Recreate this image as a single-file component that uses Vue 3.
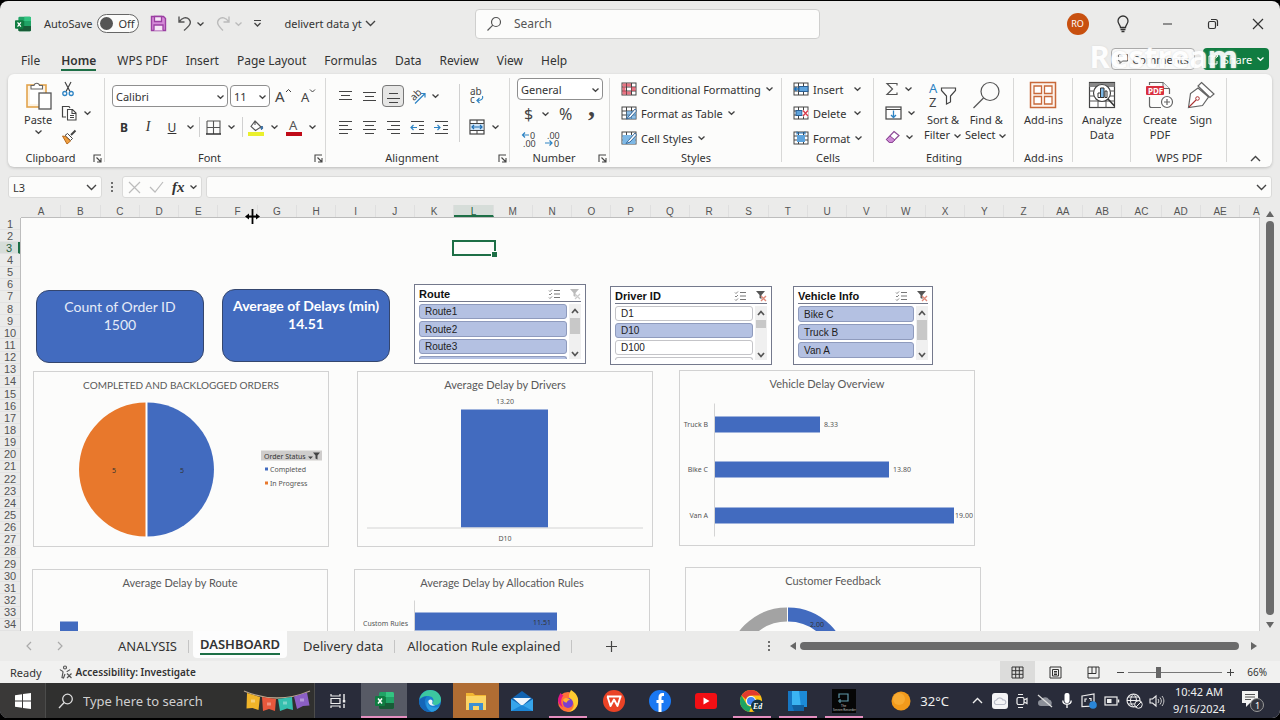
<script setup>
import { h, ref } from 'vue'

const S = 'fill="none" stroke="#555" stroke-width="1.2"'
const grid = '<rect x="1" y="1" width="14" height="12" fill="#fff" stroke="#444"/><path d="M1 5h14M1 9h14M5.5 1v12M10.5 1v12" stroke="#444" fill="none"/>'
const excel = '<rect x="4" y="1" width="15" height="17" rx="1.5" fill="#21a366"/><path d="M11 1h6.500a1.500 1.500 0 0 1 1.500 1.500V6h-8z" fill="#33c481"/><path d="M4 6h7v6H4z" fill="#107c41"/><path d="M4 12h15v4.500a1.500 1.500 0 0 1-1.500 1.500h-12A1.500 1.500 0 0 1 4 16.500z" fill="#185c37"/><rect x="0" y="5" width="10" height="10" rx="1" fill="#107c41"/><path d="M3 7.500l4 5M7 7.500l-4 5" stroke="#fff" stroke-width="1.500"/>'
const lines = (rows) => rows.map(([x1, x2, y]) => `<path d="M${x1} ${y}H${x2}" stroke="#444" stroke-width="1.200"/>`).join('')

const icons = {
  excel: [19, 19, excel],
  caret: [9, 6, '<path d="M1.500 1.500L4.500 4.300L7.500 1.500" fill="none" stroke="#444" stroke-width="1.300"/>'],
  caretPale: [9, 6, '<path d="M1.500 1.500L4.500 4.300L7.500 1.500" fill="none" stroke="#bbb" stroke-width="1.300"/>'],
  caretWhite: [9, 6, '<path d="M1.500 1.500L4.500 4.300L7.500 1.500" fill="none" stroke="#fff" stroke-width="1.300"/>'],
  chevron: [11, 7, '<path d="M1 1L5.500 5.500L10 1" fill="none" stroke="#444" stroke-width="1.400"/>'],
  chevronUp: [11, 7, '<path d="M1 6L5.500 1.500L10 6" fill="none" stroke="#444" stroke-width="1.400"/>'],
  save: [17, 17, '<path d="M1.500 1.500h12l2 2v12h-14z" fill="#d58ad8" stroke="#9b3fa2" stroke-width="1.400"/><path d="M4.500 1.500h7v5h-7zM4 15.500v-5.500h9v5.500" fill="#f6e6f7" stroke="#9b3fa2" stroke-width="1.300"/>'],
  undo: [16, 17, '<path d="M2 1.500V7H7.500M2.200 6.800C5 2.500 9.500 1.500 12 4.200C15 7.500 13 10.500 7 15.500" fill="none" stroke="#555" stroke-width="1.400"/>'],
  redo: [16, 17, '<path d="M14 1.500V7H8.500M13.800 6.800C11 2.500 6.500 1.500 4 4.200C1 7.500 3 10.500 8 15.500" fill="none" stroke="#bbb" stroke-width="1.400"/>'],
  customize: [9, 9, '<path d="M1 1.500h7" stroke="#444" stroke-width="1.200"/><path d="M1.500 4L4.500 7L7.500 4" fill="none" stroke="#444" stroke-width="1.300"/>'],
  search: [16, 16, '<circle cx="10" cy="6" r="4.500" fill="none" stroke="#555" stroke-width="1.200"/><path d="M6.800 9.200L1.500 14.500" stroke="#555" stroke-width="1.200"/>'],
  bulb: [14, 18, '<path d="M4.500 12.500C4.500 10 2 9 2 6a5 5 0 0 1 10 0c0 3-2.500 4-2.500 6.500zM4.500 14.500h5M5.500 16.500h3" fill="none" stroke="#333" stroke-width="1.300"/>'],
  min: [12, 12, '<path d="M1 6h9" stroke="#333" stroke-width="1.200"/>'],
  restore: [12, 12, '<rect x="1.500" y="3.500" width="7" height="7" rx="1.500" fill="none" stroke="#333" stroke-width="1.200"/><path d="M4 1.500h4.500a2 2 0 0 1 2 2V8" fill="none" stroke="#333" stroke-width="1.200"/>'],
  close: [12, 12, '<path d="M1 1l10 10M11 1L1 11" stroke="#333" stroke-width="1.200"/>'],
  comment: [12, 12, '<path d="M1.500 1.500h9v6.500h-5l-2.500 2.500v-2.500h-1.500z" fill="none" stroke="#555"/>'],
  share: [12, 12, '<path d="M6 3H2v8h8V8M5 7c0-3 2-4 6-4M8.500 .8L11 3L8.500 5.200" fill="none" stroke="#fff"/>'],
  paste: [27, 29, '<rect x="2" y="4" width="19" height="22" fill="#fdf3e3" stroke="#e2a34c" stroke-width="1.600"/><rect x="5" y="7" width="13" height="16" fill="#fff"/><path d="M6 8V4.500h3a2.800 2.800 0 0 1 5.500 0h3V8z" fill="#fff" stroke="#666" stroke-width="1.100"/><rect x="14" y="12" width="12" height="16" fill="#fff" stroke="#555" stroke-width="1.300"/>'],
  cut: [14, 16, '<path d="M4 1l5 9.500M10 1L5 10.500" stroke="#444" stroke-width="1.200"/><circle cx="3.800" cy="12.500" r="2" fill="none" stroke="#2e84c4" stroke-width="1.300"/><circle cx="10.200" cy="12.500" r="2" fill="none" stroke="#2e84c4" stroke-width="1.300"/>'],
  copy: [17, 16, '<path d="M5 12H1.500V1.500H8L9 3" fill="none" stroke="#444" stroke-width="1.200"/><path d="M6.500 4.500h5l3.500 3.500v7H6.500zM11 4.500V8.500h4M9 10.500h4M9 12.500h4" fill="#fff" stroke="#444" stroke-width="1.100"/>'],
  painter: [16, 16, '<path d="M14.500 1.500L10 6" stroke="#444" stroke-width="2"/><path d="M6.500 4.500l5 5l-2 2l-5.500-5z" fill="#fff" stroke="#444"/><path d="M1.500 7l3 .5l5 4.500l-3.500 3z" fill="#f0a040" stroke="#b86a1c"/>'],
  fontUp: [18, 18, '<text x="0" y="15" font-size="15" font-family="Noto Sans" fill="#444">A</text><path d="M11 5L13.500 2.500L16 5" fill="none" stroke="#444"/>'],
  fontDown: [18, 18, '<text x="2" y="15" font-size="13" font-family="Noto Sans" fill="#444">A</text><path d="M11 2.500L13.500 5L16 2.500" fill="none" stroke="#444"/>'],
  borders: [15, 15, '<path d="M1 1h13v13M1 1v13M7.500 1v13M1 7.500h13" fill="none" stroke="#555" stroke-width="1.100"/><path d="M0 14h15" stroke="#333" stroke-width="1.600"/>'],
  fill: [18, 17, '<path d="M8 2l6 6l-5.500 3.500L4 7.500zM8 6V1.500" fill="#fff" stroke="#555" stroke-width="1.100"/><path d="M15 7c1.500 2.500 0 3.500-.5 3.500s-1-1.500.5-3.500" fill="#2e84c4" stroke="#2e5f94"/><rect x="1" y="13" width="16" height="4" fill="#eaf02c"/>'],
  color: [16, 17, '<text x="3" y="11" font-size="13" font-family="Noto Sans" fill="#555">A</text><rect x="0" y="13" width="16" height="4" fill="#c00b18"/>'],
  top: [15, 15, lines([[1, 14, 2.5], [3, 12, 6.5], [1, 14, 10.5]])],
  mid: [15, 15, lines([[1, 14, 3.5], [3, 12, 7.5], [1, 14, 11.5]])],
  bot: [15, 15, lines([[3, 12, 4.5], [1, 14, 9.5], [3, 12, 13.5]])],
  left: [15, 15, lines([[1, 14, 1.5], [1, 10, 5.5], [1, 14, 9.5], [1, 10, 13.5]])],
  center: [15, 15, lines([[1, 14, 1.5], [3, 12, 5.5], [1, 14, 9.5], [3, 12, 13.5]])],
  right: [15, 15, lines([[1, 14, 1.5], [5, 14, 5.5], [1, 14, 9.5], [5, 14, 13.5]])],
  outdent: [15, 15, lines([[1, 14, 1.5], [9, 14, 5.5], [9, 14, 9.5], [1, 14, 13.5]]) + '<path d="M7 7.500H1M3.500 5L1 7.500L3.500 10" fill="none" stroke="#2e84c4" stroke-width="1.200"/>'],
  indent: [15, 15, lines([[1, 14, 1.5], [9, 14, 5.5], [9, 14, 9.5], [1, 14, 13.5]]) + '<path d="M0 7.500h6M3.500 5L6 7.500L3.500 10" fill="none" stroke="#2e84c4" stroke-width="1.200"/>'],
  orient: [18, 18, '<text x="-3" y="3" font-size="10" font-family="Noto Sans" fill="#444" transform="translate(6 10) rotate(-45)">ab</text><path d="M7 16.500L17 6.500M13 6.500h4v4" fill="none" stroke="#2e84c4" stroke-width="1.200"/>'],
  wrap: [16, 18, '<text x="1" y="8" font-size="10" font-family="Noto Sans" fill="#444">ab</text><text x="1" y="16" font-size="10" font-family="Noto Sans" fill="#444">c</text><path d="M13.500 9c1 3-1 4.500-5.500 4.500M10.500 11L8 13.500L10.500 16" fill="none" stroke="#2e84c4" stroke-width="1.200"/>'],
  merge: [16, 16, '<rect x="1" y="1" width="14" height="14" fill="#fff" stroke="#444" stroke-width="1.200"/><rect x="1.600" y="4.500" width="12.800" height="7" fill="#cfe4f6"/><path d="M1 4.500h14M1 11.500h14M8 1v3.500M8 11.500V15" stroke="#444"/><path d="M3 8h10M5 6L3 8l2 2M11 6l2 2l-2 2" fill="none" stroke="#1f6fb4" stroke-width="1.200"/>'],
  decUp: [16, 16, '<path d="M8 4H1.500M4 1.500L1.500 4L4 6.500" fill="none" stroke="#2e84c4" stroke-width="1.200"/><text x="9" y="7.500" font-size="9" font-family="Noto Sans" fill="#444">0</text><text x="2" y="15.500" font-size="9" font-family="Noto Sans" fill="#444">.00</text>'],
  decDown: [16, 16, '<text x="2" y="7.500" font-size="9" font-family="Noto Sans" fill="#444">.00</text><path d="M0 12h7M4.500 9.500L7 12L4.500 14.500" fill="none" stroke="#2e84c4" stroke-width="1.200"/><text x="9" y="15.500" font-size="9" font-family="Noto Sans" fill="#444">0</text>'],
  cond: [16, 14, grid + '<path d="M1.500 1.500h4v3h-4zM1.500 9h4v3.500h-4zM10.500 5h4v4h-4zM6 1.500h4v3H6zM1.500 5h3v4h-3zM6 9.500h4v3H6z" fill="#e0455a" fill-opacity=".75"/>'],
  table: [16, 14, grid + '<path d="M5.500 5h9.500v8H5.500z" fill="#5ea3dc" fill-opacity=".7"/><path d="M14 3L8 10l-2.500 3l4-1.500L15.500 5z" fill="#fff" stroke="#2a5f94" stroke-width=".9"/>'],
  styles: [16, 14, grid + '<path d="M1.500 4h13v9h-13z" fill="#7db8e6"/><path d="M14 2L7.500 9.500l-2.500 3l4-1.500L15.500 4z" fill="#fff" stroke="#2a5f94" stroke-width=".9"/>'],
  insert: [16, 14, grid + '<rect x="6" y="4.500" width="9" height="5" fill="#5ea3dc" stroke="#2a5f94"/><path d="M6 7H1.500M3.500 5L1.500 7l2 2" fill="none" stroke="#1f6fb4" stroke-width="1.300"/>'],
  del: [16, 14, grid + '<rect x="3" y="4.500" width="6" height="5" fill="#5ea3dc" stroke="#2a5f94"/><path d="M9.500 4h6v6.500h-6z" fill="#fff"/><path d="M10 4.500l5 5.500M15 4.500l-5 5.500" stroke="#d83b4c" stroke-width="1.300"/>'],
  format: [16, 14, grid + '<rect x="4" y="4" width="8" height="7" fill="#5ea3dc"/><path d="M4 2h8M4 .5v3M12 .5v3" stroke="#1f6fb4"/>'],
  sum: [14, 14, '<path d="M12 3.500V1.500H2L7.500 7L2 12.500H12V10.500" fill="none" stroke="#555" stroke-width="1.200"/>'],
  fillDown: [17, 14, '<rect x="1" y="1" width="15" height="12" fill="#fff" stroke="#444" stroke-width="1.200"/><path d="M1 3.500h15" stroke="#444"/><path d="M8.500 4.500v7M6 9l2.500 2.500L11 9" fill="none" stroke="#2e84c4" stroke-width="1.300"/>'],
  eraser: [15, 14, '<path d="M9 1.500l5 4L7 12.500H4.500L1.500 9.500z" fill="#fff" stroke="#8d4a96" stroke-width="1.200"/><path d="M5 6l5 4l-3 2.500H4.500L1.500 9.500z" fill="#cf8bd6" stroke="#8d4a96"/>'],
  sort: [28, 28, '<text x="0" y="12" font-size="13" font-family="Noto Sans" fill="#2e84c4">A</text><text x="0" y="26" font-size="13" font-family="Noto Sans" fill="#444">Z</text><path d="M12.500 7h14v2.500L21.500 15v6l-4 2v-8L12.500 9.500z" fill="#fff" stroke="#444" stroke-width="1.200"/>'],
  find: [28, 28, '<circle cx="18" cy="10.500" r="9" fill="none" stroke="#555" stroke-width="1.200"/><path d="M11.500 17L1.500 27" stroke="#555" stroke-width="1.300"/>'],
  addins: [28, 28, '<rect x="1.500" y="1.500" width="25" height="25" fill="#fdf4ee" stroke="#c8693a" stroke-width="1.500"/><path d="M5 5h7.500v7.500H5zM15.500 5H23v7.500h-7.500zM5 15.500h7.500V23H5zM15.500 15.500H23V23h-7.500z" fill="#fff" stroke="#c8693a" stroke-width="1.300"/>'],
  analyze: [28, 28, '<rect x="1.500" y="1.500" width="25" height="25" fill="#fff" stroke="#444" stroke-width="1.200"/><path d="M1.500 2h25v4h-25z" fill="#888"/><path d="M1.500 10h25M1.500 15h25M1.500 20h25M10 20v6.500M18 20v6.500" stroke="#555"/><circle cx="14" cy="12" r="8.500" fill="#fff" stroke="#444" stroke-width="1.200"/><path d="M10 12h2.500v4.500H10zM17 10h2v6.500h-2z" fill="#fff" stroke="#333"/><path d="M12.500 7H16v9.500h-3.500z" fill="#7db8e6" stroke="#333"/><path d="M20 18l6.500 7" stroke="#333" stroke-width="1.600"/>'],
  pdf: [30, 28, '<path d="M4.500 16v8.500a2 2 0 0 0 2 2H16M4.500 4V1.500H18L24.500 8v5" fill="none" stroke="#666" stroke-width="1.200"/><path d="M18 1.500V7.500h6.500" fill="#eee" stroke="#666"/><rect x="1" y="5" width="18" height="9" rx="1" fill="#d9303f"/><text x="3" y="12.500" font-size="8" font-weight="700" font-family="Noto Sans" fill="#fff">PDF</text><circle cx="22" cy="21" r="5.500" fill="#fff" stroke="#666" stroke-width="1.200"/><path d="M22 18v6M19 21h6" stroke="#666" stroke-width="1.200"/>'],
  sign: [28, 28, '<path d="M14.500 1.500L27 13l-4 3.500L11 5zM11 7L3.500 12.500L1.500 26.500l14-2L21.500 16z" fill="#fff" stroke="#666" stroke-width="1.200"/><path d="M2 26l7-7" stroke="#a33" stroke-width="1.100"/><circle cx="10.500" cy="17.500" r="1.800" fill="#fff" stroke="#a33"/>'],
  launch: [9, 9, '<path d="M1 8V1h7M3.500 3.500L7.500 7.500M8 4V8H4" fill="none" stroke="#444" stroke-width="1.100"/>'],
  dots: [4, 12, '<circle cx="2" cy="2" r="1" fill="#444"/><circle cx="2" cy="6" r="1" fill="#444"/><circle cx="2" cy="10" r="1" fill="#444"/>'],
  cancel: [13, 13, '<path d="M1 1l11 11M12 1L1 12" stroke="#bcbcbc" stroke-width="1.200"/>'],
  ok: [15, 12, '<path d="M1 6l5 5L14 1" fill="none" stroke="#bcbcbc" stroke-width="1.200"/>'],
  multi: [12, 10, '<path d="M5 1.500h6M5 5h6M5 8.500h6" stroke="#777"/><path d="M0 1.500l1 1L3 .5M0 5l1 1L3 4M0 8.500l1 1L3 7.500" fill="none" stroke="#777" stroke-width=".9"/>'],
  clear: [12, 12, '<path d="M1 1h9L6.500 5v4L4.500 8V5z" fill="#555"/><path d="M6 6l5 5M11 6l-5 5" stroke="#e08a7a" stroke-width="1.400"/>'],
  clearPale: [12, 12, '<path d="M1 1h9L6.500 5v4L4.500 8V5z" fill="#bbb"/><path d="M6 6l5 5M11 6l-5 5" stroke="#ccc" stroke-width="1.200"/>'],
  up: [8, 6, '<path d="M1 5L4 1.500L7 5" fill="none" stroke="#555" stroke-width="1.700"/>'],
  down: [8, 6, '<path d="M1 1L4 4.500L7 1" fill="none" stroke="#555" stroke-width="1.700"/>'],
  triUp: [8, 6, '<path d="M0 6h8L4 0z" fill="#666"/>'],
  triDown: [8, 6, '<path d="M0 0h8L4 6z" fill="#666"/>'],
  triLeft: [6, 8, '<path d="M6 0v8L0 4z" fill="#666"/>'],
  triRight: [6, 8, '<path d="M0 0v8l6-4z" fill="#666"/>'],
  resize: [15, 15, '<path d="M7.500 0v15M2 7.500h11" stroke="#000" stroke-width="1.800"/><path d="M0 7.500l4-3v6zM15 7.500l-4-3v6z" fill="#000"/>'],
  prev: [6, 10, '<path d="M5 1L1 5l4 4" fill="none" stroke="#aaa" stroke-width="1.200"/>'],
  next: [6, 10, '<path d="M1 1l4 4l-4 4" fill="none" stroke="#aaa" stroke-width="1.200"/>'],
  plus: [11, 11, '<path d="M5.500 0v11M0 5.500h11" stroke="#444" stroke-width="1.200"/>'],
  plusS: [7, 7, '<path d="M3.500 0v7M0 3.500h7" stroke="#444"/>'],
  minusS: [7, 7, '<path d="M0 3.500h7" stroke="#444"/>'],
  access: [14, 14, '<circle cx="6" cy="2.500" r="1.500" ' + S + '/><path d="M1 4.500c1 1.500 3 1 3 2.500L3 12.500l1.500.5L6 9M11 4.500c-1 1.500-3 1-3 2.500M8 8.500l4.500 4.500M12.500 8.500L8 13" ' + S + '/>'],
  vNormal: [13, 13, '<path d="M1 1h11v11H1zM1 4.700h11M1 8.300h11M4.700 1v11M8.300 1v11" fill="none" stroke="#333"/>'],
  vPage: [13, 13, '<path d="M1 1h11v11H1zM3.500 3.500h6v6.500h-6zM5 5.500h3M5 7h3M5 8.500h3" fill="none" stroke="#333"/>'],
  vBreak: [13, 13, '<path d="M1 1h11v11H1zM5 1v6.500h4V1M1 7.500h4" fill="none" stroke="#333"/>'],
  win: [16, 16, '<path d="M0 2.200L7 1.200V7.500H0zM8 1L16 0V7.500H8zM0 8.500h7v6.300L0 13.800zM8 8.500h8V16L8 15z" fill="#fff"/>'],
  searchW: [16, 16, '<circle cx="9.500" cy="6" r="4.800" fill="none" stroke="#ddd" stroke-width="1.300"/><path d="M6.200 9.500L1 15" stroke="#ddd" stroke-width="1.300"/>'],
  bunting: [68, 24, '<path d="M1 2Q34 16 67 2" fill="none" stroke="#b9a58c" stroke-width="1.300"/><path d="M4 4l13 4l-1.500 13l-6-2l-6 .5z" fill="#f0b429"/><path d="M19 8l14 2l-1 12l-6-2l-6 2z" fill="#e8583c"/><path d="M35 10l14-2l1 13l-6-1.500l-7 2.500z" fill="#35bfae"/><path d="M51 7.500l13-4l2.500 13l-6.500 .5l-6 3z" fill="#8c5fc4"/><path d="M8 12h4M24 15h4M40 14h4M57 11h4" stroke="#fff" stroke-opacity=".35" stroke-width="3"/>'],
  taskview: [16, 16, '<path d="M1 1v2h9V1M1 15v-2h9v2M1 5.500h9v5H1z" fill="none" stroke="#eee" stroke-width="1.200"/><path d="M14 1v7M14 11v4" stroke="#eee" stroke-width="1.400"/><rect x="12.800" y="7" width="2.500" height="2.500" fill="#eee"/>'],
  edge: [24, 24, '<circle cx="12" cy="12" r="11" fill="#1b7fd0"/><path d="M1.500 10C3 4 8 1 12 1c7 0 11 5 11 9c0 4-3 6-6 6c-2 0-3-1-2-2.500C17 9 13 7 9.500 7C6 7 3 8.500 1.500 10z" fill="#3cc7a0"/><path d="M9.500 7.500C5 9 6 20 14 22.700C7 24 1 19 1 12C3 8.500 6 7 9.500 7.500z" fill="#1466b8"/><path d="M10 11c-1.500 4 2 8 8 7.500c1.500 0 3-.8 3.500-1.200c-2 4-6 5.700-8 5.500C8 20 7 14 10 11z" fill="#2a9ae0"/><path d="M10.500 11.500c2-2 4.500-.5 4 1.500c-1 2 .5 3 3 3c-4 2-8-1-7-4.500z" fill="#eaf6fb"/>'],
  explorer: [22, 20, '<path d="M1 2h7l2 2h11v15H1z" fill="#f2b632"/><path d="M1 5h20v14H1z" fill="#fbd464"/><path d="M4 19v-7h14v7h-4v-4H8v4z" fill="#3f8fd0"/>'],
  mail: [24, 22, '<path d="M1 9L12 1l11 8v12H1z" fill="#1263b0"/><path d="M3 8h18L12 16z" fill="#eef5fb"/><path d="M1 9l11 7l11-7v12H1z" fill="#37a5ea"/><path d="M1 21l11-6l11 6z" fill="#1c86d6"/>'],
  firefox: [24, 24, '<circle cx="12" cy="13" r="10" fill="#ff7139"/><path d="M15 1c5 3 8 7 7 13c-1 5-5 9-10 9c5-2 7-6 5-10c-1-2-4-3-4-6c0-2 1-4 2-6z" fill="#ffcb30"/><path d="M2 11C2 8 3.500 6 4.500 4c1 1 1.500 2 3 2.500C5 9 4 14 7 18c-3-1-5-4-5-7z" fill="#e31587"/><circle cx="12" cy="14" r="5" fill="#7a3fd0"/><path d="M7 11c2-3 6-2 7 0c-2 0-3 1-3 2.500c-2 0-3-.5-4-2.500z" fill="#ffb02e"/>'],
  wps: [24, 24, '<circle cx="12" cy="12" r="11" fill="#ea4326"/><path d="M5 7.500h14.500M5.500 7.500L8.500 17L12 10.500L15.500 17L18.500 7.500" fill="none" stroke="#fff" stroke-width="1.900" stroke-linejoin="round"/>'],
  facebook: [24, 24, '<circle cx="12" cy="12" r="11" fill="#1a78f2"/><path d="M16 5.500h-1.500c-2 0-2.500 1-2.500 3V23M8.500 12.500h7" fill="none" stroke="#fff" stroke-width="3"/>'],
  youtube: [24, 18, '<rect x="1" y="1" width="22" height="16" rx="3" fill="#f20f14"/><path d="M9.500 5.500v7l6-3.500z" fill="#fff"/>'],
  chrome: [26, 24, '<circle cx="12" cy="12" r="11" fill="#fbc116"/><path d="M2.500 6.500a11 11 0 0 1 19 0H12a5.500 5.500 0 0 0-5 4z" fill="#e33b2e"/><path d="M2.500 6.500L7.500 15c1 2 3 2.500 5 2.500L10 23A11 11 0 0 1 2.500 6.500z" fill="#1da462"/><circle cx="12" cy="12" r="5" fill="#fff"/><circle cx="12" cy="12" r="4" fill="#4285f4"/><circle cx="18.500" cy="17" r="6.500" fill="#17323f"/><text x="14" y="20" font-size="8" font-style="italic" font-weight="700" font-family="Liberation Serif" fill="#fff">Ed</text>'],
  phone: [22, 22, '<path d="M1 1h15v20H1z" fill="#1676c2"/><path d="M5 1h12v14H5z" fill="#3bb4f2"/><path d="M12 1h8v16h-6z" fill="#1c8bd8"/><path d="M5 15h12v6H7z" fill="#125f9e"/>'],
  recorder: [24, 24, '<rect width="24" height="24" fill="#060606"/><path d="M7 9V5h3M9 5h7v7H9M6 12h4M8 10v4" fill="none" stroke="#5f97a8" stroke-width="1.200"/><text x="9" y="18" font-size="3" font-family="Noto Sans" fill="#ccc">The</text><text x="1" y="21.500" font-size="3" font-family="Noto Sans" fill="#ccc">Screen Recorder</text>'],
  sun: [20, 20, '<circle cx="10" cy="10" r="9.500" fill="#f19a1b"/><circle cx="8" cy="8" r="6" fill="#f7ab33"/>'],
  upW: [11, 7, '<path d="M1 6L5.500 1.500L10 6" fill="none" stroke="#eee" stroke-width="1.400"/>'],
  cloud: [16, 16, '<rect width="16" height="16" rx="3" fill="#f4f4f6"/><path d="M4 11.500a2.300 2.300 0 0 1 .5-4.500a3.500 3.500 0 0 1 6.500 0a2.300 2.300 0 0 1 1 4.500z" fill="none" stroke="#b9bcc8" stroke-width="1.200"/>'],
  cam: [14, 16, '<rect x="2" y="4.500" width="7" height="7" rx="1.500" fill="none" stroke="#eee" stroke-width="1.200"/><path d="M9 7l3-1.500v5L9 9M3 1.500h5M3 14.500h5" fill="none" stroke="#eee" stroke-width="1.200"/>'],
  cloudOff: [16, 14, '<path d="M4 12a3 3 0 0 1 0-6a4.500 4.500 0 0 1 8-.5a3.500 3.500 0 0 1 1 6.500z" fill="#8d9099"/><path d="M1 1l14 12" stroke="#ddd" stroke-width="1.300"/>'],
  mic: [10, 16, '<rect x="2.500" y="0" width="5" height="10" rx="2" fill="#fff"/><path d="M.8 7.500c0 5 8.400 5 8.400 0M5 11.500V15" fill="none" stroke="#fff" stroke-width="1.300"/>'],
  sync: [17, 16, '<path d="M1 3l12-2v12l-12 .5z" fill="none" stroke="#eee" stroke-width="1.200"/><path d="M4 9V6h2M8 5.500h2V8" fill="none" stroke="#eee" stroke-width="1.200"/><circle cx="12" cy="12" r="3.800" fill="#2a86d8"/>'],
  battery: [16, 10, '<rect x="1" y="1" width="12" height="8" fill="none" stroke="#eee" stroke-width="1.200"/><rect x="3" y="3" width="4.500" height="4" fill="#eee"/><path d="M14.500 3.500v3" stroke="#eee" stroke-width="1.500"/>'],
  globe: [17, 16, '<circle cx="7.500" cy="7.500" r="6.500" fill="none" stroke="#eee" stroke-width="1.100"/><path d="M1 7.500h13M2 4h11M2 11h8M7.500 1c-4 4-4 9 0 13M7.500 1c4 4 4 9 0 13" fill="none" stroke="#eee"/><circle cx="12.500" cy="11.500" r="3.800" fill="#2b2e3b" stroke="#eee"/><path d="M10 14l5-5" stroke="#eee"/>'],
  sound: [15, 14, '<path d="M1 5h2.500L7 2v10L3.500 9H1z" fill="none" stroke="#eee" stroke-width="1.100"/><path d="M9 5c1 1.500 1 2.500 0 4M11 3.500c1.800 2.500 1.800 4.500 0 7M13 2c2.500 3.500 2.500 6.500 0 10" fill="none" stroke="#ccc"/>'],
  notif: [24, 24, '<path d="M1 2h16v12H9l-4 4v-4H1z" fill="#f3f3f3"/><path d="M4 5.500h10M4 8h10M4 10.500h6" stroke="#555"/><circle cx="16" cy="16" r="6.500" fill="#33353f" stroke="#999"/><text x="14" y="19.500" font-size="9" font-family="Noto Sans" fill="#fff">1</text>'],
}

const Ico = (props) => {
  const [w, ht, markup] = icons[props.n]
  return h('svg', { width: w, height: ht, viewBox: `0 0 ${w} ${ht}`, 'aria-hidden': 'true', innerHTML: markup })
}
Ico.props = ['n']

const menu = ['File', 'Home', 'WPS PDF', 'Insert', 'Page Layout', 'Formulas', 'Data', 'Review', 'View', 'Help']
const cols = [...'ABCDEFGHIJKLMNOPQRSTUVWXYZ'].concat(['AA', 'AB', 'AC', 'AD', 'AE', 'AF'])
const slicers = ref([
  { id: 'route', title: 'Route', clear: 'clearPale', items: [['Route1', 1], ['Route2', 1], ['Route3', 1]], more: 'on' },
  { id: 'driver', title: 'Driver ID', clear: 'clear', items: [['D1', 0], ['D10', 1], ['D100', 0]], more: 'off' },
  { id: 'vehicle', title: 'Vehicle Info', clear: 'clear', items: [['Bike C', 1], ['Truck B', 1], ['Van A', 1]], more: '' },
])
const vehicleBars = [
  { name: 'Truck B', y: 45, w: 105, value: '8.33', vx: 144 },
  { name: 'Bike C', y: 90, w: 174, value: '13.80', vx: 213 },
  { name: 'Van A', y: 136, w: 239, value: '19.00', vx: 275 },
]
const sheets = ['ANALYSIS', 'DASHBOARD', 'Delivery data', 'Allocation Rule explained']
const apps = [
  ['Excel', 'excel', 'active run'], ['Edge', 'edge', ''], ['File Explorer', 'explorer', 'alert'], ['Mail', 'mail', ''],
  ['Firefox', 'firefox', 'run'], ['WPS Office', 'wps', ''], ['Facebook', 'facebook', ''], ['YouTube', 'youtube', ''],
  ['Chrome', 'chrome', 'run'], ['Phone Link', 'phone', 'run'], ['Screen Recorder', 'recorder', 'run'],
]
const tray = ['upW', 'cloud', 'cam', 'cloudOff', 'mic', 'sync', 'battery', 'globe', 'sound']
</script>

<template>
  <div class="screen">
    <div class="window">
      <header class="title">
        <div class="quick">
          <Ico n="excel" class="logo" />
          <label class="auto">AutoSave <span class="toggle"><input type="checkbox" aria-label="AutoSave"><i></i><span>Off</span></span></label>
          <button aria-label="Save" class="save"><Ico n="save" /></button>
          <button aria-label="Undo" class="undo"><Ico n="undo" /><Ico n="caret" /></button>
          <button aria-label="Redo" class="undo"><Ico n="redo" /><Ico n="caretPale" /></button>
          <button aria-label="Customize toolbar" class="cust"><Ico n="customize" /></button>
          <button class="filename">delivert data yt <Ico n="chevron" /></button>
        </div>
        <label class="search"><Ico n="search" /><input type="text" placeholder="Search" aria-label="Search"></label>
        <div class="winctl">
          <button aria-label="Account"><span class="avatar">RO</span></button>
          <button aria-label="Tips"><Ico n="bulb" /></button>
          <button aria-label="Minimize"><Ico n="min" /></button>
          <button aria-label="Restore"><Ico n="restore" /></button>
          <button aria-label="Close"><Ico n="close" /></button>
        </div>
      </header>

      <nav class="menu">
        <button v-for="m in menu" :key="m" :class="{ on: m === 'Home' }">{{ m }}</button>
        <div class="collab">
          <button class="comments"><Ico n="comment" />Comments</button>
          <button class="share"><Ico n="share" />Share <Ico n="caretWhite" /></button>
          <span class="watermark">Restream</span>
        </div>
      </nav>

      <section class="ribbon">
        <div class="group">
          <div class="body clip">
            <button class="big"><Ico n="paste" /><span>Paste</span><Ico n="caret" /></button>
            <div class="stack">
              <button aria-label="Cut"><Ico n="cut" /></button>
              <button aria-label="Copy"><Ico n="copy" /><Ico n="caret" /></button>
              <button aria-label="Format painter"><Ico n="painter" /></button>
            </div>
          </div>
          <div class="foot">Clipboard<Ico n="launch" /></div>
        </div>

        <div class="group">
          <div class="body font">
            <div class="line">
              <label class="combo face"><select aria-label="Font"><option>Calibri</option></select><Ico n="caret" /></label>
              <label class="combo size"><select aria-label="Font size"><option>11</option></select><Ico n="caret" /></label>
              <button class="w24" aria-label="Increase font size"><Ico n="fontUp" /></button>
              <button class="w24" aria-label="Decrease font size"><Ico n="fontDown" /></button>
            </div>
            <div class="line">
              <button class="w24"><b>B</b></button>
              <button class="w24"><i class="serif">I</i></button>
              <button class="w24"><u>U</u></button>
              <button class="w12" aria-label="Underline style"><Ico n="caret" /></button>
              <span class="sep"></span>
              <button class="w20" aria-label="Borders"><Ico n="borders" /></button>
              <button class="w16" aria-label="Border options"><Ico n="caret" /></button>
              <span class="sep"></span>
              <button class="w20" aria-label="Fill color"><Ico n="fill" /></button>
              <button class="w16" aria-label="Fill options"><Ico n="caret" /></button>
              <button class="w24" aria-label="Font color"><Ico n="color" /></button>
              <button class="w12" aria-label="Font color options"><Ico n="caret" /></button>
            </div>
          </div>
          <div class="foot">Font<Ico n="launch" /></div>
        </div>

        <div class="group">
          <div class="body align">
            <div class="font">
              <div class="line">
                <button class="w24" aria-label="Top align"><Ico n="top" /></button>
                <button class="w24" aria-label="Middle align"><Ico n="mid" /></button>
                <button class="w24 pressed" aria-label="Bottom align"><Ico n="bot" /></button>
                <button class="w24" aria-label="Orientation"><Ico n="orient" /></button>
                <button class="w12" aria-label="Orientation options"><Ico n="caret" /></button>
              </div>
              <div class="line">
                <button v-for="a in ['left', 'center', 'right', 'outdent', 'indent']" :key="a" class="w24" :aria-label="a"><Ico :n="a" /></button>
              </div>
            </div>
            <div class="font merge">
              <div class="line"><button class="w24" aria-label="Wrap text"><Ico n="wrap" /></button></div>
              <div class="line"><button class="w24" aria-label="Merge"><Ico n="merge" /></button><button class="w12" aria-label="Merge options"><Ico n="caret" /></button></div>
            </div>
          </div>
          <div class="foot">Alignment<Ico n="launch" /></div>
        </div>

        <div class="group">
          <div class="body number">
            <label class="combo"><select aria-label="Number format"><option>General</option></select><Ico n="caret" /></label>
            <div class="line"><button class="sym w24">$</button><button class="w12" aria-label="Currency options"><Ico n="caret" /></button><button class="sym pct">%</button><button class="sym comma w24">,</button></div>
            <div class="line"><button class="w24" aria-label="Increase decimal"><Ico n="decUp" /></button><button class="w24" aria-label="Decrease decimal"><Ico n="decDown" /></button></div>
          </div>
          <div class="foot">Number<Ico n="launch" /></div>
        </div>

        <div class="group">
          <div class="body list">
            <button><Ico n="cond" />Conditional Formatting<Ico n="caret" /></button>
            <button><Ico n="table" />Format as Table<Ico n="caret" /></button>
            <button><Ico n="styles" />Cell Styles<Ico n="caret" /></button>
          </div>
          <div class="foot">Styles</div>
        </div>

        <div class="group">
          <div class="body list cells">
            <button><Ico n="insert" /><span>Insert</span><Ico n="caret" /></button>
            <button><Ico n="del" /><span>Delete</span><Ico n="caret" /></button>
            <button><Ico n="format" /><span>Format</span><Ico n="caret" /></button>
          </div>
          <div class="foot">Cells</div>
        </div>

        <div class="group">
          <div class="body editing">
            <div class="stack">
              <button aria-label="AutoSum"><Ico n="sum" /><Ico n="caret" /></button>
              <button aria-label="Fill"><Ico n="fillDown" /><Ico n="caret" /></button>
              <button aria-label="Clear"><Ico n="eraser" /><Ico n="caret" /></button>
            </div>
            <button class="big"><Ico n="sort" /><span>Sort &amp;<br>Filter <Ico n="caret" /></span></button>
            <button class="big"><Ico n="find" /><span>Find &amp;<br>Select <Ico n="caret" /></span></button>
          </div>
          <div class="foot">Editing</div>
        </div>

        <div class="group">
          <div class="body mid"><button class="big"><Ico n="addins" /><span>Add-ins</span></button></div>
          <div class="foot">Add-ins</div>
        </div>
        <div class="group">
          <div class="body mid"><button class="big"><Ico n="analyze" /><span>Analyze<br>Data</span></button></div>
        </div>
        <div class="group">
          <div class="body mid">
            <button class="big"><Ico n="pdf" /><span>Create<br>PDF</span></button>
            <button class="big"><Ico n="sign" /><span>Sign</span></button>
          </div>
          <div class="foot">WPS PDF</div>
        </div>
        <div class="last"><button aria-label="Collapse ribbon"><Ico n="chevronUp" /></button></div>
      </section>

      <section class="formula">
        <label class="box name"><input type="text" value="L3" aria-label="Name box"><Ico n="chevron" /></label>
        <Ico n="dots" />
        <div class="box fx">
          <button aria-label="Cancel"><Ico n="cancel" /></button>
          <button aria-label="Enter"><Ico n="ok" /></button>
          <button class="fn" aria-label="Insert function">fx</button>
          <Ico n="caret" />
        </div>
        <label class="box input"><input type="text" aria-label="Formula"><Ico n="chevron" /></label>
      </section>

      <main class="sheet">
        <div class="corner"></div>
        <div class="cols">
          <span v-for="c in cols" :key="c" :class="{ sel: c === 'L' }">{{ c }}</span>
          <Ico n="resize" class="cursor" />
        </div>
        <div class="vscroll"><Ico n="triUp" /><i></i><Ico n="triDown" /></div>
        <div class="rows"><span v-for="r in 34" :key="r" :class="{ sel: r === 3 }">{{ r }}</span></div>

        <div class="canvas">
          <div class="cell"></div>
          <div class="kpi k1">Count of Order ID<br>1500</div>
          <div class="kpi k2">Average of Delays (min)<br>14.51</div>

          <section v-for="s in slicers" :key="s.id" class="slicer" :class="s.id">
            <header><h3>{{ s.title }}</h3><Ico n="multi" /><Ico :n="s.clear" /></header>
            <div class="pick">
              <div class="opts">
                <button v-for="[t, on] in s.items" :key="t" :class="{ on }">{{ t }}</button>
                <i v-if="s.more" :class="s.more"></i>
              </div>
              <div class="bar"><Ico n="up" /><i></i><Ico n="down" /></div>
            </div>
          </section>

          <figure class="chart c1">
            <figcaption>COMPLETED AND BACKLOGGED ORDERS</figcaption>
            <svg viewBox="0 0 294 173">
              <path d="M113 30a67 67 0 0 1 0 134z" fill="#426bbf" />
              <path d="M112 30a67 67 0 0 0 0 134z" fill="#e8782c" />
              <path d="M112.500 29v136" stroke="#fff" stroke-width="2" />
              <text x="78" y="100" class="dark">5</text><text x="146" y="100" class="dark">5</text>
              <rect x="227" y="78" width="61" height="10" fill="#cfcdcc" />
              <text x="230" y="86" class="dark">Order Status</text>
              <path d="M274 84h5l-2.500 2.500zM279 80h7l-2.500 3v4l-2-1v-3z" fill="#444" />
              <rect x="231" y="95" width="3" height="3" fill="#426bbf" /><text x="236" y="99">Completed</text>
              <rect x="231" y="109" width="3" height="3" fill="#e8782c" /><text x="236" y="113">In Progress</text>
            </svg>
          </figure>
          <figure class="chart c2">
            <figcaption>Average Delay by Drivers</figcaption>
            <svg viewBox="0 0 294 173">
              <text x="147" y="31" text-anchor="middle">13.20</text>
              <rect x="103" y="37" width="87" height="118" fill="#426bbf" />
              <path d="M9 155.500h276" stroke="#d4d4d4" />
              <text x="147" y="168" text-anchor="middle">D10</text>
            </svg>
          </figure>
          <figure class="chart c3">
            <figcaption>Vehicle Delay Overview</figcaption>
            <svg viewBox="0 0 294 173">
              <path d="M34.500 32v133" stroke="#d4d4d4" />
              <g v-for="b in vehicleBars" :key="b.name">
                <text x="28" :y="b.y + 10" text-anchor="end">{{ b.name }}</text>
                <rect x="35" :y="b.y" :width="b.w" height="16" fill="#426bbf" />
                <text :x="b.vx" :y="b.y + 10">{{ b.value }}</text>
              </g>
            </svg>
          </figure>
          <figure class="chart c4">
            <figcaption>Average Delay by Route</figcaption>
            <svg viewBox="0 0 294 173"><rect x="27" y="51" width="18" height="90" fill="#426bbf" /></svg>
          </figure>
          <figure class="chart c5">
            <figcaption>Average Delay by Allocation Rules</figcaption>
            <svg viewBox="0 0 294 173">
              <path d="M59.500 30v133" stroke="#d4d4d4" />
              <text x="53" y="55" text-anchor="end">Custom Rules</text>
              <rect x="60" y="42" width="142" height="18" fill="#426bbf" />
              <text x="196" y="54" text-anchor="end" class="dark">11.51</text>
            </svg>
          </figure>
          <figure class="chart c6">
            <figcaption>Customer Feedback</figcaption>
            <svg viewBox="0 0 294 173">
              <path d="M101 46a53 53 0 0 0-53 53" fill="none" stroke="#a3a3a3" stroke-width="14" />
              <path d="M102 46a53 53 0 0 1 53 53" fill="none" stroke="#426bbf" stroke-width="14" />
              <text x="124" y="58" class="dark">2.00</text>
            </svg>
          </figure>
        </div>
      </main>

      <section class="tabs">
        <div class="nav"><button aria-label="Previous sheet"><Ico n="prev" /></button><button aria-label="Next sheet"><Ico n="next" /></button></div>
        <button v-for="s in sheets" :key="s" class="tab" :class="{ on: s === 'DASHBOARD' }"><span>{{ s }}</span></button>
        <button class="add" aria-label="New sheet"><Ico n="plus" /></button>
        <div class="hscroll"><Ico n="dots" /><Ico n="triLeft" /><i></i><Ico n="triRight" /></div>
      </section>

      <footer class="status">
        <span>Ready</span>
        <button class="acc"><Ico n="access" />Accessibility: Investigate</button>
        <div class="views">
          <button class="on" aria-label="Normal view"><Ico n="vNormal" /></button>
          <button aria-label="Page layout view"><Ico n="vPage" /></button>
          <button aria-label="Page break view"><Ico n="vBreak" /></button>
        </div>
        <button class="step" aria-label="Zoom out"><Ico n="minusS" /></button>
        <input type="range" min="0" max="100" value="31" aria-label="Zoom">
        <button class="step" aria-label="Zoom in"><Ico n="plusS" /></button>
        <span class="level">66%</span>
      </footer>

      <footer class="taskbar">
        <button class="start" aria-label="Start"><Ico n="win" /></button>
        <label class="find"><Ico n="searchW" /><input type="text" placeholder="Type here to search" aria-label="Type here to search"><Ico n="bunting" /></label>
        <div class="dock">
          <button aria-label="Task view" class="app"><Ico n="taskview" /></button>
          <button v-for="[name, icon, cls] in apps" :key="name" class="app" :class="cls" :aria-label="name"><Ico :n="icon" /></button>
        </div>
        <button class="weather"><Ico n="sun" />32°C</button>
        <div class="tray"><span v-for="t in tray" :key="t"><Ico :n="t" /></span></div>
        <div class="clock">10:42 AM<br>9/16/2024</div>
        <button class="notif" aria-label="Notifications"><Ico n="notif" /></button>
      </footer>
    </div>
  </div>
</template>

<style>
body { background: #000; overflow: hidden; }
</style>

<style scoped>
.screen { height: 100vh; box-sizing: border-box; padding: 1px 0 2px; background: #000; font-family: "Noto Sans", sans-serif; font-size: 11px; color: #333; }
.screen * { box-sizing: border-box; }
.window { height: 100%; display: flex; flex-direction: column; background: #ebebea; border-radius: 8px; overflow: hidden; }
button { font: inherit; color: inherit; background: none; border: 0; padding: 0; display: flex; align-items: center; justify-content: center; }
input, select { font: inherit; color: inherit; background: none; border: 0; padding: 0; margin: 0; outline: 0; min-width: 0; }
svg { flex: none; display: block; overflow: visible; }
h3, figure { margin: 0; }

.title { height: 45px; display: grid; grid-template-columns: 475fr 345fr 460fr; align-items: center; }
.quick { display: flex; align-items: center; white-space: nowrap; }
.logo { width: 16px; height: 16px; margin: 0 13px 0 15px; }
.auto { display: flex; align-items: center; gap: 5px; }
.toggle { position: relative; display: flex; align-items: center; width: 42px; height: 19px; border: 1px solid #666; border-radius: 10px; background: #fbfbfa; padding-left: 20px; }
.toggle input { position: absolute; inset: 0; opacity: 0; width: 100%; height: 100%; }
.toggle i { position: absolute; left: 2px; width: 13px; height: 13px; border-radius: 50%; background: #555; }
.save { margin-left: 11px; }
.undo { margin-left: 10px; gap: 3px; }
.cust { margin: 0 22px 0 10px; }
.filename { gap: 3px; }
.search { display: flex; align-items: center; gap: 12px; height: 30px; padding: 0 10px; background: #fcfcfb; border: 1px solid #cfcfce; border-radius: 4px; font-size: 12px; }
.search input { flex: 1; }
input::placeholder { color: #555; opacity: 1; }
.winctl { display: flex; justify-content: flex-end; }
.winctl button { width: 45px; height: 32px; }
.avatar { width: 22px; height: 22px; border-radius: 50%; background: #c8500f; color: #fff; font-size: 9px; line-height: 22px; }

.menu { height: 28px; display: flex; align-items: stretch; gap: 18px; padding: 0 11px 0 21px; font-size: 12px; }
.menu > button { position: relative; }
.menu > .on { font-weight: 600; margin: 0 3px; }
.menu .on::after { content: ""; position: absolute; left: 0; right: 0; bottom: 3px; height: 2px; background: #1d6f46; }
.collab { position: relative; display: flex; align-items: center; gap: 8px; margin-left: auto; padding-bottom: 2px; }
.comments { width: 84px; height: 22px; gap: 3px; border: 1px solid #aaa; border-radius: 4px; background: #fafafa; font-size: 11px; }
.share { width: 66px; height: 22px; gap: 4px; border-radius: 4px; background: #107c41; color: #fff; font-size: 11px; }
.watermark { position: absolute; right: 31px; bottom: 0; font-size: 31px; line-height: 36px; font-weight: 700; color: #fff; opacity: .93; text-shadow: 0 0 2px #d5d5d5; }

.ribbon { height: 93px; margin: 0 8px; background: #fcfcfb; border-radius: 6px; box-shadow: 0 1px 3px rgba(0,0,0,.2); display: grid; grid-template-columns: 97fr 221fr 184fr 100fr 172fr 92fr 140fr 59fr 58fr 96fr 45fr; }
.group { min-width: 0; display: flex; flex-direction: column; padding: 4px 0 2px; background: linear-gradient(#d8d8d7, #d8d8d7) right 4px / 1px 84px no-repeat; }
.body { flex: 1; min-height: 0; }
.foot { position: relative; text-align: center; line-height: 16px; height: 16px; padding-right: 12px; white-space: nowrap; }
.foot svg { position: absolute; right: 3px; top: 4px; }
.big { flex-direction: column; gap: 3px; line-height: 15px; justify-content: flex-start; }
.big span { white-space: nowrap; text-align: center; }
.big span svg { display: inline-block; }
.stack { display: grid; grid-template-rows: 22px 26px 22px; }
.stack button { gap: 4px; justify-content: flex-start; }
.clip { display: flex; gap: 9px; padding: 0 0 0 16px; }
.clip .big { padding-top: 3px; gap: 2px; }
.clip .stack button { min-width: 16px; gap: 5px; }
.font { display: flex; flex-direction: column; gap: 9px; padding: 7px 0 0 7px; }
.line { display: flex; align-items: center; height: 22px; }
.w24 { width: 24px; height: 22px; }
.w20 { width: 20px; }
.w16 { width: 16px; }
.w12 { width: 12px; }
.sep { width: 1px; height: 20px; margin: 0 3px; background: #d0d0d0; }
.combo { position: relative; display: flex; height: 22px; border: 1px solid #8f8f8f; border-radius: 4px; background: #fff; }
.combo select { appearance: none; width: 100%; padding: 0 3px; }
.combo svg { position: absolute; right: 2px; top: 8px; pointer-events: none; }
.face { width: 116px; margin-right: 2px; }
.size { width: 40px; margin-right: 2px; }
.line b, .line u { font-size: 12px; }
.line .serif { font-family: "Liberation Serif", serif; font-size: 14px; }
.pressed { border: 1px solid #777; border-radius: 4px; background: #e6e6e5; width: 22px; margin: 0 1px; }
.align { display: flex; gap: 6px; }
.align .font { padding-left: 7px; }
.align .merge { padding-left: 5px; border-left: 1px solid #d0d0d0; margin: 6px 0 8px; padding-top: 1px; }
.number { padding: 0 7px; display: flex; flex-direction: column; gap: 3px; }
.number .combo { flex: none; }
.sym { font-size: 16px; color: #444; }
.pct { width: 30px; }
.comma { font-size: 28px; font-weight: 700; font-family: "Liberation Serif", serif; line-height: 10px; padding-bottom: 14px; }
.list { display: grid; grid-template-rows: 22px 26px 24px; padding-left: 11px; }
.list button { justify-content: flex-start; gap: 4px; white-space: nowrap; }
.cells button span { min-width: 36px; text-align: left; }
.editing { display: flex; gap: 3px; padding-left: 11px; }
.editing .stack { width: 36px; }
.editing .stack button { gap: 5px; }
.editing .big, .mid .big { padding-top: 3px; }
.mid { display: flex; justify-content: center; gap: 10px; }
.group:nth-child(n+7) .foot, .group:nth-child(5) .foot, .group:nth-child(6) .foot { padding-right: 0; }
.last { display: flex; align-items: flex-end; justify-content: flex-end; padding: 0 11px 6px; }

.formula { height: 22px; margin: 9px 8px 7px; display: flex; align-items: center; gap: 8px; }
.box { height: 22px; background: #fcfcfb; border: 1px solid #dadad9; border-radius: 3px; display: flex; align-items: center; padding: 0 4px; }
.name { width: 94px; }
.input { flex: 1; margin-left: -4px; }
.box input { flex: 1; width: 0; }
.fx { width: 80px; gap: 8px; padding: 0 3px 0 5px; }
.fn { font: italic 700 15px "Liberation Serif", serif; margin-right: -4px; }

.sheet { flex: 1; min-height: 0; display: grid; grid-template: 13px minmax(0, 1fr) / 21px minmax(0, 1fr) 20px; font-family: "Liberation Sans", sans-serif; font-size: 11px; color: #555; }
.cols { position: relative; z-index: 2; display: flex; padding-left: 1px; border-bottom: 1px solid #bdbdbd; min-width: 0; clip-path: inset(0 0 -20px 0); font-size: 10px; }
.cols span { flex: none; width: calc(100% / 31.5); text-align: center; line-height: 13px; border-right: 1px solid #dfdfdf; }
.cols .sel { background: #d6ddd9; border-bottom: 2px solid #1d6f46; color: #1d5c40; }
.cursor { position: absolute; left: 224px; top: 4px; }
.rows { grid-row: 2; overflow: hidden; border-right: 1px solid #bdbdbd; }
.rows span { display: flex; height: calc(100% / 34); align-items: center; justify-content: center; line-height: 12px; border-bottom: 1px solid #e2e2e2; }
.rows .sel { background: #d6ddd9; border-right: 2px solid #1d6f46; color: #1d5c40; }
.vscroll { grid-column: 3; grid-row: 1 / 3; display: flex; flex-direction: column; align-items: center; gap: 4px; padding: 6px 0 0; }
.vscroll i { flex: 1; width: 8px; border-radius: 4px; background: #6b6b6b; }
.vscroll svg:last-child { margin: 3px 0; }
.canvas { grid-column: 2; grid-row: 2; position: relative; overflow: hidden; background: #fcfcfb; border-right: 1px solid #d0d0d0; }
.cell { position: absolute; left: calc(100% * 11 / 31.5); top: calc(100% * 2 / 34); margin: -2px -1px; width: 44px; height: 16px; border: 2px solid #1d6f46; }
.cell::after { content: ""; position: absolute; right: -3px; bottom: -3px; width: 5px; height: 5px; background: #1d6f46; border: 1px solid #fff; border-width: 1px 0 0 1px; }
.kpi { position: absolute; width: 168px; height: 73px; padding-top: 7px; border: 1px solid #34466e; border-radius: 13px; background: #426bbf; color: #e6ecf8; text-align: center; font: 14px/18px Lato, sans-serif; white-space: nowrap; }
.k1 { left: 15px; top: 72px; }
.k2 { left: 201px; top: 71px; color: #fff; font-weight: 700; }

.slicer { position: absolute; height: 79px; padding: 1px 4px 4px; border: 1px solid #74798c; background: #fff; color: #111; display: flex; flex-direction: column; }
.slicer header { height: 16px; display: flex; align-items: center; gap: 8px; border-bottom: 1px solid #74798c; margin-bottom: 2px; }
.slicer h3 { flex: 1; font-size: 11px; font-weight: 700; }
.pick { flex: 1; min-height: 0; display: flex; gap: 2px; }
.opts { flex: 1; display: flex; flex-direction: column; gap: 2px; }
.opts button { height: 16px; justify-content: flex-start; padding-left: 5px; border: 1px solid #c4c4c8; border-radius: 3px; background: #fff; color: #222; font-size: 10px; }
.opts .on { background: #b4c1e2; border-color: #8f9bbd; }
.opts i { height: 3px; border: 1px solid #c4c4c8; border-bottom: 0; border-radius: 3px 3px 0 0; }
.bar { width: 12px; display: flex; flex-direction: column; align-items: center; gap: 4px; padding: 4px 0 2px; background: #f0f0f0; }
.bar i { width: 10px; height: 16px; background: #c8c8c8; }
.bar svg:last-child { margin-top: auto; }
.driver .bar i { height: 8px; }
.vehicle .bar i { height: 20px; }
.route { left: 393px; top: 66px; width: 172px; height: 80px; }
.driver { left: 589px; top: 68px; width: 162px; }
.vehicle { left: 772px; top: 68px; width: 140px; }

.chart { position: absolute; width: 296px; height: 176px; border: 1px solid #d2d2d2; }
.chart figcaption { position: absolute; left: 0; right: 0; top: 4px; text-align: center; font: 11px/18px Lato, sans-serif; color: #595959; white-space: nowrap; }
.chart svg { width: 100%; height: 100%; }
.chart text { font: 7px "Noto Sans", sans-serif; fill: #555; }
.chart .dark { fill: #333; }
.c1 figcaption { font-size: 10px; }
.c1 { left: 12px; top: 153px; }
.c2 { left: 336px; top: 153px; }
.c3 { left: 658px; top: 152px; }
.c4 { left: 11px; top: 351px; }
.c5 { left: 333px; top: 351px; }
.c6 { left: 664px; top: 349px; }

.tabs { height: 30px; display: flex; align-items: stretch; font-size: 13px; }
.nav { width: 106px; display: flex; gap: 25px; padding-left: 26px; }
.tab { position: relative; padding: 0 12px; }
.tab::after { content: ""; position: absolute; right: 0; top: 9px; height: 13px; width: 1px; background: #c4c4c4; }
.tab.on { background: #fdfdfd; padding: 0 7px; margin: 0 4px 3px; border-radius: 0 0 4px 4px; font-weight: 600; }
.tab.on::after { display: none; }
.tab.on span { border-bottom: 2px solid #1d6f46; line-height: 18px; }
.add { margin-left: 34px; }
.hscroll { flex: 1; display: flex; align-items: center; margin-left: auto; max-width: 513px; gap: 4px; padding-right: 23px; }
.hscroll svg:first-child { margin-right: 15px; }
.hscroll i { flex: 1; height: 8px; border-radius: 4px; background: #6b6b6b; margin-right: 8px; }

.status { height: 22px; display: flex; align-items: center; padding: 0 13px 0 10px; background: #f1f1f0; white-space: nowrap; }
.acc { margin-left: 17px; gap: 3px; font-weight: 600; font-size: 10px; }
.views { display: flex; height: 100%; margin-left: auto; }
.views button { width: 38px; }
.views .on { background: #dcdcdb; width: 35px; margin-right: 1px; }
.step { width: 16px; }
.status input { appearance: none; width: 94px; height: 10px; background: linear-gradient(#777, #777) center / 100% 1px no-repeat; }
.status input::-webkit-slider-thumb { appearance: none; width: 5px; height: 11px; background: #666; }
.level { width: 29px; text-align: right; font-size: 10px; }

.taskbar { height: 35px; display: flex; align-items: stretch; background: #292c3a; color: #f0f0f0; }
.start { width: 45px; background: #3a3938; }
.find { width: 270px; display: flex; align-items: center; gap: 9px; padding: 0 3px 0 12px; background: #30302f; border: 1px solid #4c4c4b; border-width: 0 1px 0 1px; font-size: 13px; }
.find input { flex: 1; }
.find input::placeholder { color: #cfcfcf; }
.dock { display: flex; }
.app { width: 46px; position: relative; }
.app.active { background: #575a65; }
.app.alert { background: #b06d33; }
.app.run::after { content: ""; position: absolute; left: 4px; right: 4px; bottom: 0; height: 2px; background: #e58fc0; }
.app.active::after { left: 0; right: 0; }
.weather { margin-left: auto; gap: 9px; font-size: 13px; }
.tray { display: flex; width: 202px; margin-left: 17px; }
.tray span { flex: 1; display: flex; align-items: center; justify-content: center; }
.clock { width: 62px; text-align: center; line-height: 17px; font-size: 11px; }
.notif { width: 50px; padding-right: 4px; }
</style>
